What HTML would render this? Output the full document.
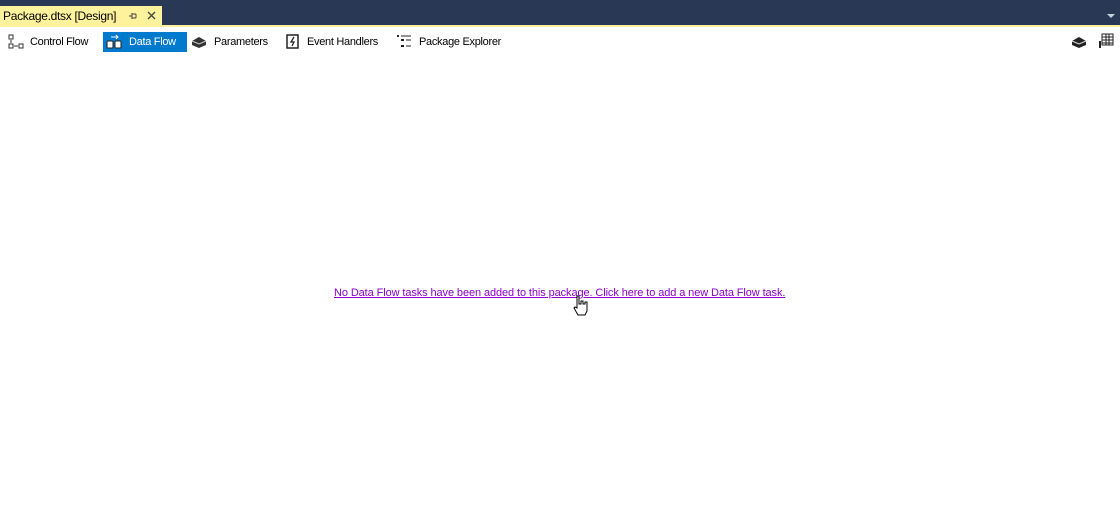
<!DOCTYPE html>
<html><head><style>
body{margin:0;width:1120px;height:525px;background:#fff;font-family:"Liberation Sans",sans-serif;font-size:11px;position:relative;overflow:hidden}
.top{position:absolute;left:0;top:0;width:1120px;height:25px;background:#293955}
.tab{position:absolute;left:0;top:6px;width:162px;height:19px;background:#fff29d;color:#000}
.tab span{position:absolute;left:3px;top:3px;font-size:12px;letter-spacing:-0.3px}
.line{position:absolute;left:0;top:25px;width:1120px;height:2px;background:#fff29d}
.it{position:absolute;top:34px;height:18px;line-height:17px;color:#000;letter-spacing:-0.3px}
.sel{background:#007acc;color:#fff}
a{position:absolute;left:334px;top:287px;color:#8b00c9;text-decoration:underline;font-size:11px;letter-spacing:-0.1px}
</style></head><body>
<div class="top"></div>
<div class="tab"><span>Package.dtsx [Design]</span>
<svg style="position:absolute;left:128px;top:5px" width="10" height="10"><path d="M1 5H4M4 2V8M4 3H8M4 7H8M8 3V7" stroke="#444" fill="none"/></svg>
<svg style="position:absolute;left:147px;top:5px" width="9" height="9"><path d="M1 1L8 8M8 1L1 8" stroke="#444" stroke-width="1.3"/></svg>
</div>
<svg style="position:absolute;left:1107px;top:14px" width="8" height="5"><path d="M0 0H8L4 4Z" fill="#c8d0e0"/></svg>
<div class="line"></div>
<svg style="position:absolute;left:8px;top:34px" width="16" height="16"><rect x="1" y="1" width="4" height="4" fill="none" stroke="#333"/><rect x="1" y="10" width="4" height="4" fill="none" stroke="#333"/><rect x="11" y="10" width="4" height="4" fill="none" stroke="#333"/><path d="M3 6V9M6 12H10" stroke="#333"/></svg>
<div class="it" style="left:30px">Control Flow</div>
<div class="sel" style="position:absolute;left:103px;top:32px;width:84px;height:20px"></div>
<svg style="position:absolute;left:106px;top:34px" width="17" height="16"><rect x="1" y="7" width="6" height="7" rx="1" fill="#fff" stroke="#222"/><rect x="9" y="7" width="6" height="7" rx="1" fill="#fff" stroke="#222"/><path d="M5 3H12M10 1L12 3L10 5" stroke="#fff" fill="none"/></svg>
<div class="it" style="left:129px;color:#fff">Data Flow</div>
<svg style="position:absolute;left:191px;top:35px" width="16" height="14"><path d="M1 6L8 2L15 6V10L8 13L1 10Z" fill="#333"/><path d="M1 6L8 9L15 6" stroke="#ccc" fill="none"/></svg>
<div class="it" style="left:214px">Parameters</div>
<svg style="position:absolute;left:286px;top:34px" width="14" height="15"><rect x="1" y="1" width="11" height="13" fill="none" stroke="#222" stroke-width="1.5"/><path d="M8 3L5 8H8L6 12" stroke="#222" fill="none" stroke-width="1.3"/></svg>
<div class="it" style="left:307px">Event Handlers</div>
<svg style="position:absolute;left:397px;top:34px" width="16" height="15"><rect x="0" y="1" width="2" height="2" fill="#222"/><rect x="4" y="5" width="3" height="2" fill="#222"/><rect x="4" y="11" width="3" height="2" fill="#222"/><path d="M4 2H14M9 6H14M9 12H14" stroke="#222"/></svg>
<div class="it" style="left:419px">Package Explorer</div>
<svg style="position:absolute;left:1071px;top:35px" width="16" height="14"><path d="M1 6L8 2L15 6V10L8 13L1 10Z" fill="#222"/><path d="M1 6L8 9L15 6" stroke="#ddd" fill="none"/></svg>
<svg style="position:absolute;left:1098px;top:33px" width="16" height="16"><rect x="4" y="1" width="11" height="11" fill="none" stroke="#222"/><path d="M4 4H15M4 7H15M4 10H15M8 1V12M11 1V12" stroke="#222"/><path d="M2 8V15" stroke="#222" stroke-width="2"/></svg>
<a>No Data Flow tasks have been added to this package. Click here to add a new Data Flow task.</a>
<svg style="position:absolute;left:572px;top:295px" width="17" height="22"><path d="M5 1H7V9H9V6H11V9H13V7H15V16L13 20H6L2 13L3 12L5 13Z" fill="#fff" stroke="#000"/></svg>
</body></html>
